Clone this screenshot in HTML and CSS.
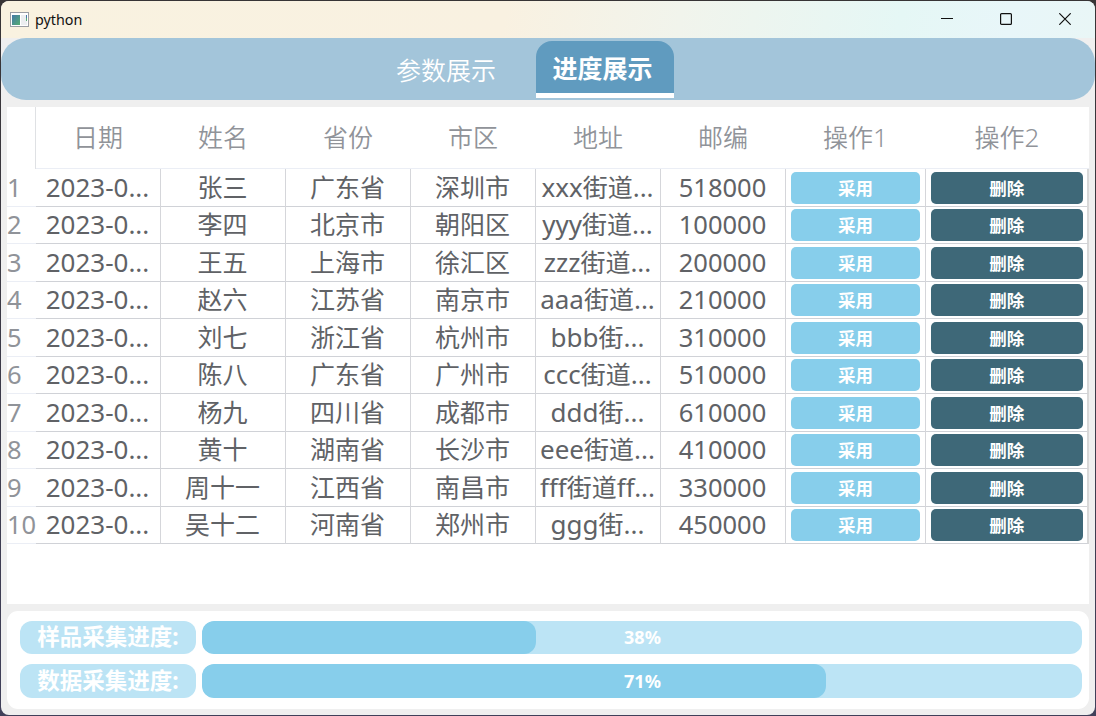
FILE: index.html
```html
<!DOCTYPE html>
<html lang="zh-CN">
<head>
<meta charset="utf-8">
<title>python</title>
<link rel="stylesheet" href="styles.css">
</head>
<body>
<div class="window">
  <header class="titlebar">
    <svg class="app-icon" width="19" height="16" viewBox="0 0 19 16">
      <defs><linearGradient id="g" x1="0" y1="0" x2="1" y2="1"><stop offset="0" stop-color="#4579a8"/><stop offset="1" stop-color="#55ad72"/></linearGradient></defs>
      <rect x=".5" y=".5" width="18" height="14" fill="#fff" stroke="#9b9ea3"/>
      <rect x="2" y="3" width="8" height="10" fill="url(#g)"/>
      <rect x="11" y="3" width="6" height="10" fill="#eceef0"/>
      <rect x="16" y="3" width="1" height="3" fill="#4579a8"/><rect x="16" y="6" width="1" height="3" fill="#55ad72"/>
    </svg>
    <span class="title">python</span>
    <div class="controls">
      <svg width="12" height="12" viewBox="0 0 12 12"><path d="M0 5.5H12"/></svg>
      <svg width="12" height="12" viewBox="0 0 12 12"><rect x=".6" y=".6" width="10.8" height="10.8" rx="1"/></svg>
      <svg width="12" height="12" viewBox="0 0 12 12"><path d="M.3 .3L11.7 11.7M11.7 .3L.3 11.7"/></svg>
    </div>
  </header>
  <nav class="tabs">
    <span class="tab">参数展示</span>
    <span class="tab active">进度展示</span>
  </nav>
  <main class="table">
    <div class="head"><span class="corner"></span><span>日期</span><span>姓名</span><span>省份</span><span>市区</span><span>地址</span><span>邮编</span><span>操作<i>1</i></span><span>操作<i>2</i></span></div>
    <div class="row"><span class="idx">1</span><span class="num date">2023-0...</span><span>张三</span><span>广东省</span><span>深圳市</span><span><i>xxx</i>街道<i>...</i></span><span class="num">518000</span><span class="act"><button class="use">采用</button></span><span class="act"><button class="del">删除</button></span></div>
    <div class="row"><span class="idx">2</span><span class="num date">2023-0...</span><span>李四</span><span>北京市</span><span>朝阳区</span><span><i>yyy</i>街道<i>...</i></span><span class="num">100000</span><span class="act"><button class="use">采用</button></span><span class="act"><button class="del">删除</button></span></div>
    <div class="row"><span class="idx">3</span><span class="num date">2023-0...</span><span>王五</span><span>上海市</span><span>徐汇区</span><span><i>zzz</i>街道<i>...</i></span><span class="num">200000</span><span class="act"><button class="use">采用</button></span><span class="act"><button class="del">删除</button></span></div>
    <div class="row"><span class="idx">4</span><span class="num date">2023-0...</span><span>赵六</span><span>江苏省</span><span>南京市</span><span><i>aaa</i>街道<i>...</i></span><span class="num">210000</span><span class="act"><button class="use">采用</button></span><span class="act"><button class="del">删除</button></span></div>
    <div class="row"><span class="idx">5</span><span class="num date">2023-0...</span><span>刘七</span><span>浙江省</span><span>杭州市</span><span><i>bbb</i>街<i>...</i></span><span class="num">310000</span><span class="act"><button class="use">采用</button></span><span class="act"><button class="del">删除</button></span></div>
    <div class="row"><span class="idx">6</span><span class="num date">2023-0...</span><span>陈八</span><span>广东省</span><span>广州市</span><span><i>ccc</i>街道<i>...</i></span><span class="num">510000</span><span class="act"><button class="use">采用</button></span><span class="act"><button class="del">删除</button></span></div>
    <div class="row"><span class="idx">7</span><span class="num date">2023-0...</span><span>杨九</span><span>四川省</span><span>成都市</span><span><i>ddd</i>街<i>...</i></span><span class="num">610000</span><span class="act"><button class="use">采用</button></span><span class="act"><button class="del">删除</button></span></div>
    <div class="row"><span class="idx">8</span><span class="num date">2023-0...</span><span>黄十</span><span>湖南省</span><span>长沙市</span><span><i>eee</i>街道<i>...</i></span><span class="num">410000</span><span class="act"><button class="use">采用</button></span><span class="act"><button class="del">删除</button></span></div>
    <div class="row"><span class="idx">9</span><span class="num date">2023-0...</span><span>周十一</span><span>江西省</span><span>南昌市</span><span><i>fff</i>街道<i>ff...</i></span><span class="num">330000</span><span class="act"><button class="use">采用</button></span><span class="act"><button class="del">删除</button></span></div>
    <div class="row"><span class="idx">10</span><span class="num date">2023-0...</span><span>吴十二</span><span>河南省</span><span>郑州市</span><span><i>ggg</i>街<i>...</i></span><span class="num">450000</span><span class="act"><button class="use">采用</button></span><span class="act"><button class="del">删除</button></span></div>
  </main>
  <section class="panel">
    <div class="progress first"><span class="label">样品采集进度:</span><div class="bar"><div class="fill" style="width:38%"></div><span class="pct">38%</span></div></div>
    <div class="progress"><span class="label">数据采集进度:</span><div class="bar"><div class="fill" style="width:70.9%"></div><span class="pct">71%</span></div></div>
  </section>
</div>
</body>
</html>
```
FILE: styles.css
```css
* { box-sizing: border-box; }
body {
  margin: 0;
  width: 1096px;
  height: 716px;
  padding: 1px;
  overflow: hidden;
  background: linear-gradient(#373435, #40405a);
  font-family: "Noto Sans", "Noto Sans CJK SC", sans-serif;
}
.window {
  height: 714px;
  border-radius: 8px;
  overflow: hidden;
  background: #efefef;
  display: flex;
  flex-direction: column;
}
.titlebar {
  flex: none;
  height: 37px;
  padding: 0 24px 0 9px;
  display: flex;
  align-items: center;
  background: linear-gradient(100deg, #f9f2e0 0%, #f9f1e1 46%, #f1f4ec 62%, #e5f7f5 82%, #e8f6f9 92%, #e9f6f6 100%);
}
.title { margin-left: 6px; font-size: 14.3px; color: #111; }
.controls { margin-left: auto; padding-bottom: 2px; display: flex; gap: 47px; }
.controls svg { display: block; fill: none; stroke: #111; stroke-width: 1.2; }
.tabs {
  flex: none;
  height: 62.4px;
  border-radius: 25px;
  background: #a3c5da;
  display: flex;
  justify-content: center;
  align-items: flex-start;
  padding-top: 3px;
  padding-right: 64px;
}
.tab {
  width: 138px;
  height: 57px;
  font-family: "Noto Sans CJK SC", sans-serif;
  font-size: 25px;
  line-height: 56px;
  text-align: center;
  color: #fff;
  font-weight: 350;
}
.tab:first-child { width: 178px; padding-right: 2px; }
.tab.active {
  padding-right: 5px;
  border-radius: 16px 16px 0 0;
  border-bottom: 5px solid #fff;
  background: #609bbf;
  font-weight: 700;
  line-height: 53px;
}
.table {
  flex: none;
  height: 497px;
  margin: 6.6px 6px 0;
  background: #fff;
  color: #606266;
  font-size: 25px;
}
.head, .row {
  display: grid;
  grid-template-columns: 29px repeat(6, 125px) 140px 163px;
}
.head > span, .row > span {
  display: flex;
  align-items: center;
  justify-content: center;
  min-width: 0;
  white-space: nowrap;
  line-height: 36px;
  padding-right: 1px;
}
i { font-style: normal; font-size: 26px; }
.head { height: 62px; color: #909399; font-weight: 350; }
.head > span { border-bottom: 1px solid #ebeef5; }
.head > .corner { border-bottom: 0; border-right: 1px solid #dfe1e4; }
.row { height: 37.5px; }
.row > span { border-right: 1px solid #d5d6da; border-bottom: 1px solid #d0d2d7; padding-bottom: 0.6px; }
.row > .idx {
  justify-content: flex-start;
  padding-left: 0;
  border-right: 0;
  border-bottom-color: #ebeef5;
  color: #909399;
  font-size: 25.5px;
}
.row > .num { font-size: 25.5px; }
.row > .date { font-size: 26px; }
.row > .act { align-items: stretch; padding: 3px 5px 2px; }
.row > .act:last-child { border-right: 2px solid #d8d8d8; padding-right: 4.5px; }
button {
  flex: 1;
  border: 0;
  border-radius: 5px;
  padding: 0;
  color: #fff;
  font: 700 17.5px/24px "Noto Sans CJK SC", sans-serif;
}
.use { background: #87ceeb; }
.del { background: #3e6878; }
.panel {
  flex: none;
  height: 98px;
  margin: 7px 6px 0;
  padding: 10px 7px 11px 13px;
  border-radius: 11px;
  background: #fff;
  display: flex;
  flex-direction: column;
  gap: 10px;
}
.progress { flex: 1; display: flex; gap: 6px; color: #fff; font-weight: 700; }
.progress.first { flex: none; height: 33px; }
.label {
  width: 176px;
  border-radius: 12px;
  background: #bce4f5;
  display: flex;
  align-items: center;
  justify-content: center;
  font-size: 22.5px;
  line-height: 30px;
}
.bar { flex: 1; display: grid; border-radius: 12px; background: #bce4f5; overflow: hidden; }
.fill { grid-area: 1 / 1; border-radius: 12px; background: #87ceeb; }
.pct { grid-area: 1 / 1; place-self: center; padding-left: 1px; font-size: 18px; line-height: 24px; }
```
